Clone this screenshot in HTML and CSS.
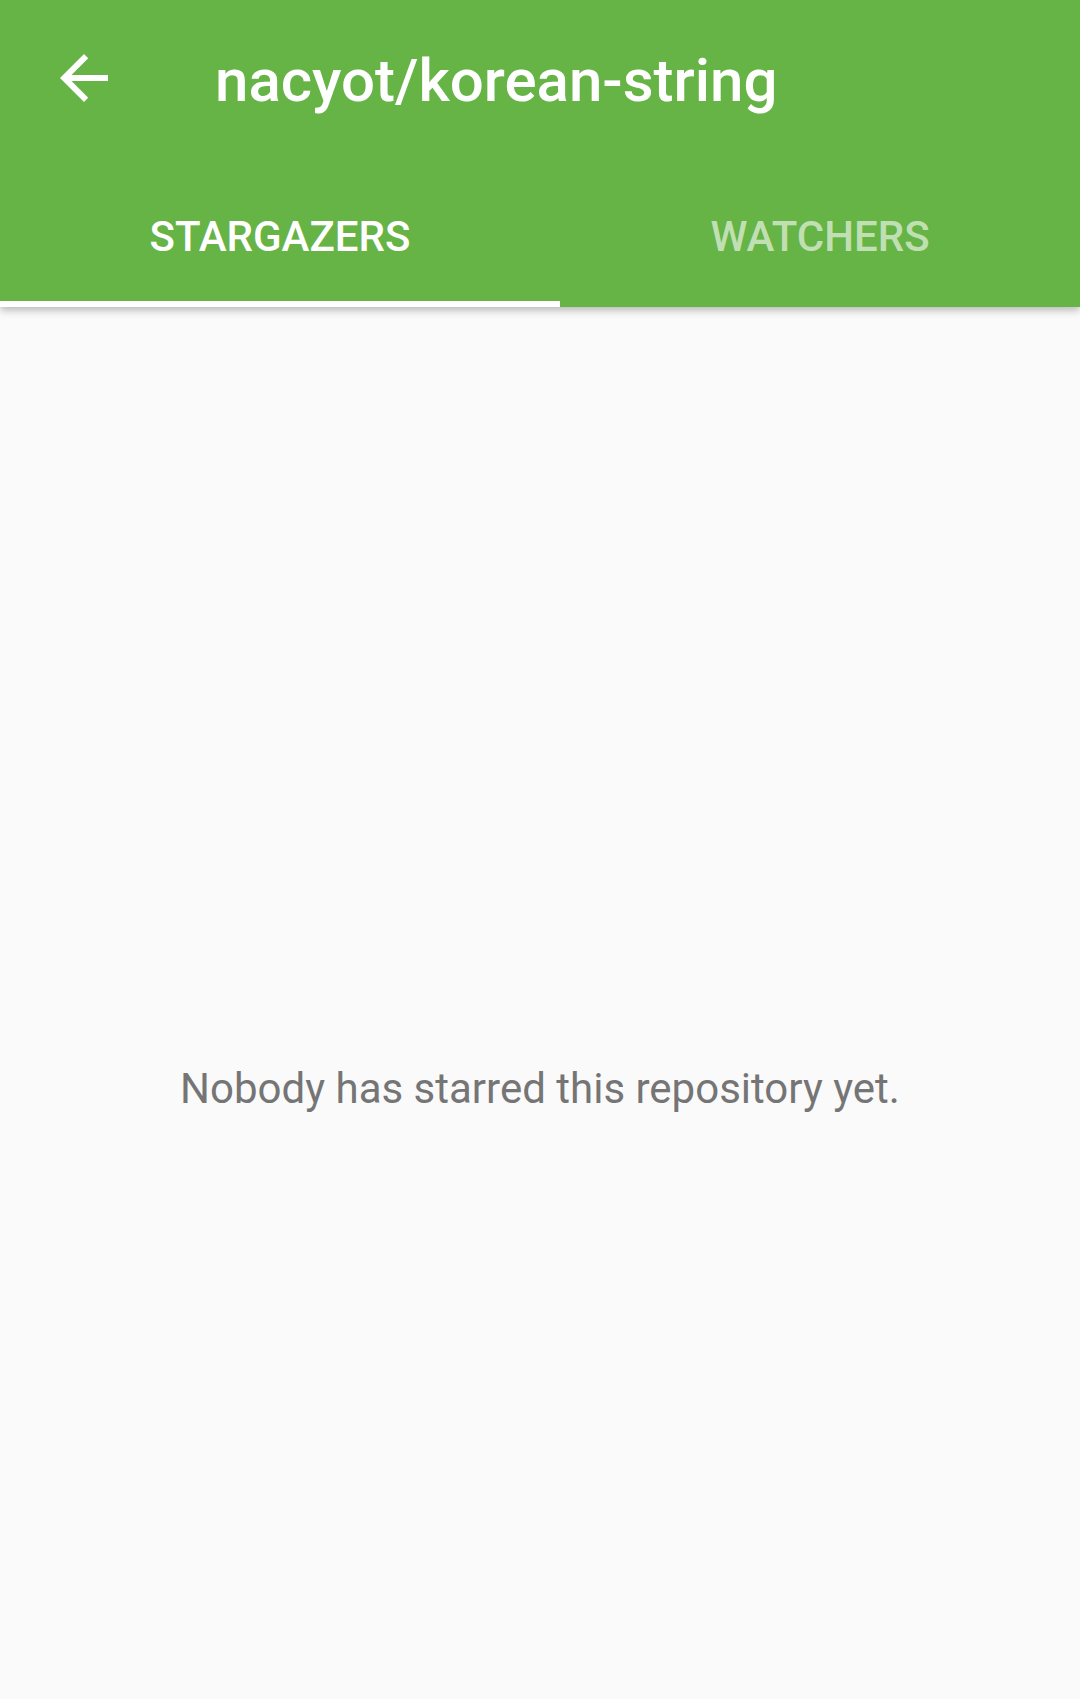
FILE: index.html
```html
<!DOCTYPE html>
<html>
<head>
<meta charset="utf-8">
<link rel="stylesheet" href="styles.css">
</head>
<body>
<div class="app">
  <header class="appbar">
    <div class="toolbar">
      <div class="nav-btn">
        <svg class="nav-icon" viewBox="0 0 24 24" width="72" height="72"><path fill="#ffffff" d="M20 11H7.83l5.59-5.59L12 4l-8 8 8 8 1.41-1.41L7.83 13H20v-2z"/></svg>
      </div>
      <h1 class="title">nacyot/korean-string</h1>
    </div>
    <nav class="tabs">
      <div class="tab tab-active">STARGAZERS</div>
      <div class="tab tab-inactive">WATCHERS</div>
    </nav>
  </header>
  <main class="content">
    <p class="empty">Nobody has starred this repository yet.</p>
  </main>
</div>
</body>
</html>
```
FILE: styles.css
```css
html, body {
  margin: 0;
  padding: 0;
  background: #fafafa;
}
body {
  font-family: Roboto, "Liberation Sans", sans-serif;
}
.app {
  min-height: 1699px;
  display: flex;
  flex-direction: column;
}
.appbar {
  background: #66b346;
  box-shadow: 0 3px 8px rgba(0, 0, 0, 0.28);
  position: relative;
  z-index: 1;
}
.toolbar {
  height: 168px;
  display: flex;
  align-items: center;
}
.nav-btn {
  width: 72px;
  height: 72px;
  margin-left: 48px;
  margin-top: -13px;
}
.nav-icon {
  display: block;
}
.title {
  margin: -7px 0 0 95px;
  color: #ffffff;
  font-size: 60px;
  font-weight: 500;
  line-height: 70px;
}
.tabs {
  display: flex;
  height: 139px;
}
.tab {
  display: flex;
  align-items: center;
  justify-content: center;
  font-size: 42px;
  font-weight: 500;
  box-sizing: border-box;
  padding-top: 4px;
}
.tab-active {
  width: 560px;
  color: #ffffff;
  border-bottom: 6px solid #ffffff;
}
.tab-inactive {
  width: 520px;
  color: rgba(255, 255, 255, 0.6);
  border-bottom: 6px solid transparent;
}
.content {
  flex: 1;
  padding-top: 757px;
}
.empty {
  margin: 0;
  text-align: center;
  color: #757575;
  font-size: 42px;
  line-height: 49px;
}
```
